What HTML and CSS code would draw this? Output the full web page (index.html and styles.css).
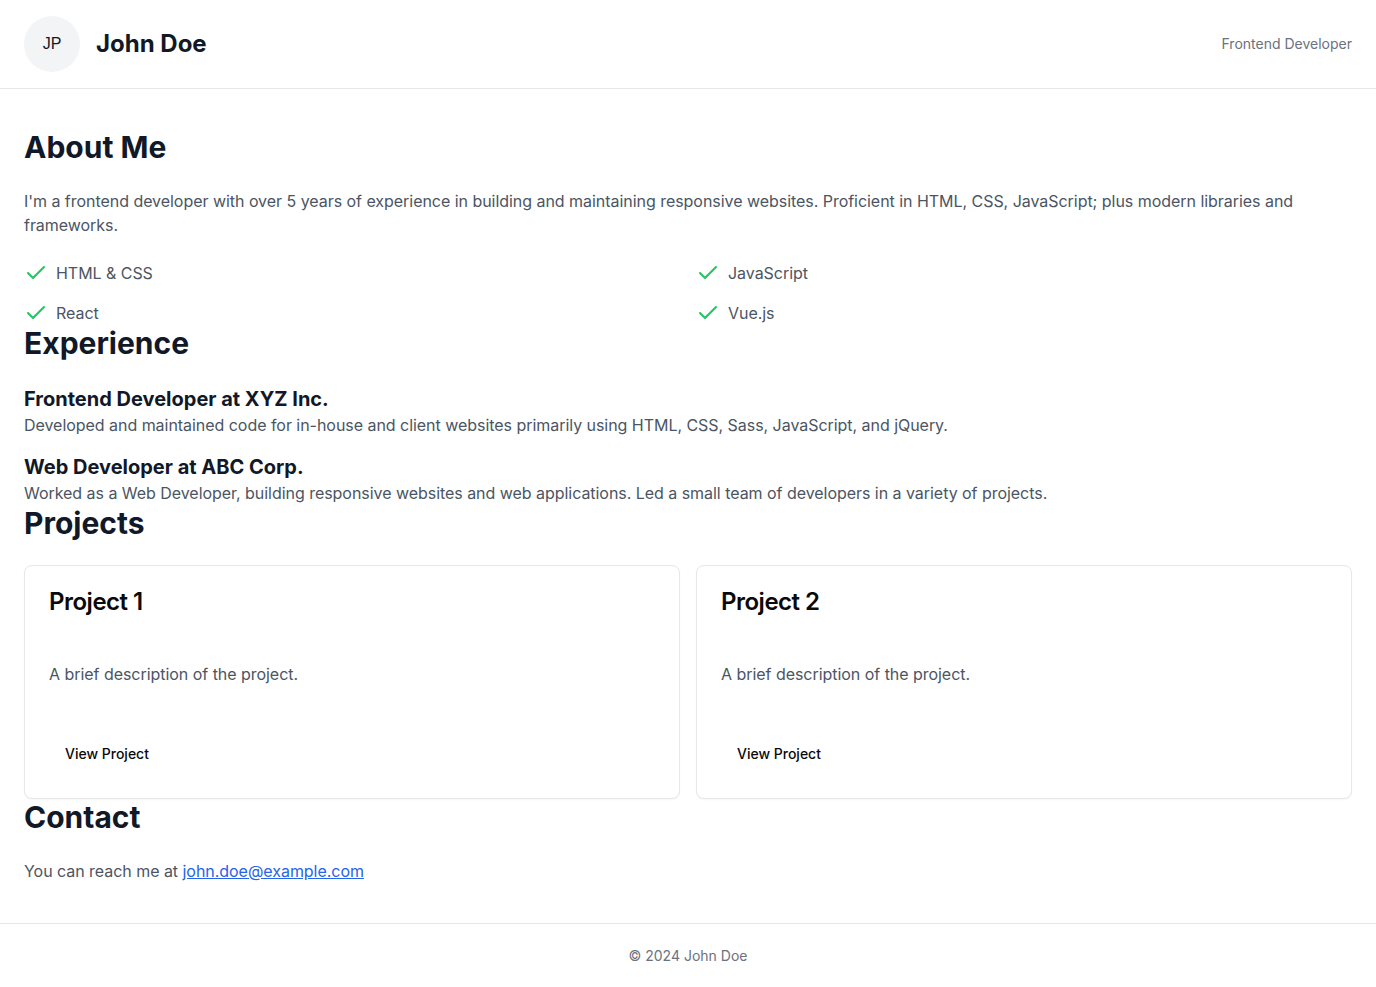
FILE: index.html
```html
<!DOCTYPE html>
<html lang="en">
<head>
<meta charset="utf-8">
<title>John Doe</title>
<link rel="stylesheet" href="styles.css">
</head>
<body>
<header class="site-header">
  <div class="brand">
    <div class="avatar">JP</div>
    <h1 class="name">John Doe</h1>
  </div>
  <span class="role">Frontend Developer</span>
</header>
<main class="main">
  <section class="section">
    <h2 class="section-title">About Me</h2>
    <p class="text about-text">I'm a frontend developer with over 5 years of experience in building and maintaining responsive websites. Proficient in HTML, CSS, JavaScript; plus modern libraries and frameworks.</p>
    <ul class="skills">
      <li class="skill"><svg class="check" viewBox="0 0 24 24" width="24" height="24" fill="none" stroke="currentColor" stroke-width="2" stroke-linecap="round" stroke-linejoin="round"><path d="M20 6 9 17l-5-5"/></svg><span>HTML &amp; CSS</span></li>
      <li class="skill"><svg class="check" viewBox="0 0 24 24" width="24" height="24" fill="none" stroke="currentColor" stroke-width="2" stroke-linecap="round" stroke-linejoin="round"><path d="M20 6 9 17l-5-5"/></svg><span>JavaScript</span></li>
      <li class="skill"><svg class="check" viewBox="0 0 24 24" width="24" height="24" fill="none" stroke="currentColor" stroke-width="2" stroke-linecap="round" stroke-linejoin="round"><path d="M20 6 9 17l-5-5"/></svg><span>React</span></li>
      <li class="skill"><svg class="check" viewBox="0 0 24 24" width="24" height="24" fill="none" stroke="currentColor" stroke-width="2" stroke-linecap="round" stroke-linejoin="round"><path d="M20 6 9 17l-5-5"/></svg><span>Vue.js</span></li>
    </ul>
  </section>
  <section class="section">
    <h2 class="section-title">Experience</h2>
    <div class="job">
      <h3 class="job-title">Frontend Developer at XYZ Inc.</h3>
      <p class="text">Developed and maintained code for in-house and client websites primarily using HTML, CSS, Sass, JavaScript, and jQuery.</p>
    </div>
    <div class="job">
      <h3 class="job-title">Web Developer at ABC Corp.</h3>
      <p class="text">Worked as a Web Developer, building responsive websites and web applications. Led a small team of developers in a variety of projects.</p>
    </div>
  </section>
  <section class="section">
    <h2 class="section-title">Projects</h2>
    <div class="projects">
      <div class="card">
        <h3 class="card-title">Project 1</h3>
        <p class="text card-text">A brief description of the project.</p>
        <div class="card-footer"><button class="btn">View Project</button></div>
      </div>
      <div class="card">
        <h3 class="card-title">Project 2</h3>
        <p class="text card-text">A brief description of the project.</p>
        <div class="card-footer"><button class="btn">View Project</button></div>
      </div>
    </div>
  </section>
  <section class="section">
    <h2 class="section-title">Contact</h2>
    <p class="text">You can reach me at <a class="link" href="mailto:john.doe@example.com">john.doe@example.com</a></p>
  </section>
</main>
<footer class="site-footer">
  <p class="copy">© 2024 John Doe</p>
</footer>
</body>
</html>
```

FILE: styles.css
```css
* { box-sizing: border-box; }
html, body { margin: 0; padding: 0; }
body {
  font-family: Inter, "Noto Sans", sans-serif;
  color: #111827;
  background: #ffffff;
}
.site-header {
  display: flex;
  align-items: center;
  justify-content: space-between;
  padding: 16px 24px;
  border-bottom: 1px solid #e5e7eb;
}
.brand {
  display: flex;
  align-items: center;
  gap: 16px;
}
.avatar {
  width: 56px;
  height: 56px;
  border-radius: 50%;
  background: #f3f4f6;
  display: flex;
  align-items: center;
  justify-content: center;
  font-family: "Liberation Sans", Arial, sans-serif;
  font-size: 16px;
  color: #111827;
}
.name {
  margin: 0;
  font-size: 24px;
  line-height: 32px;
  font-weight: 700;
  color: #111827;
}
.role {
  font-size: 14px;
  line-height: 20px;
  color: #6b7280;
}
.main {
  padding: 40px 24px 40px;
}
.section-title {
  margin: 0 0 24px;
  font-size: 30px;
  line-height: 36px;
  font-weight: 700;
  color: #111827;
}
.text {
  margin: 0;
  font-size: 16px;
  line-height: 24px;
  letter-spacing: -0.04px;
  color: #4b5563;
}
.about-text { margin-bottom: 24px; }
.skills {
  list-style: none;
  margin: 0;
  padding: 0;
  display: grid;
  grid-template-columns: 1fr 1fr;
  column-gap: 16px;
  row-gap: 16px;
}
.skill {
  display: flex;
  align-items: center;
  gap: 8px;
  font-size: 16px;
  line-height: 24px;
  letter-spacing: -0.04px;
  color: #4b5563;
}
.check { color: #22c55e; flex-shrink: 0; }
.job + .job { margin-top: 16px; }
.job-title {
  margin: 0;
  font-size: 20px;
  line-height: 28px;
  font-weight: 700;
  color: #111827;
}
.projects {
  display: grid;
  grid-template-columns: 1fr 1fr;
  gap: 16px;
}
.card {
  border: 1px solid #e5e7eb;
  border-radius: 8px;
  padding: 24px 24px 25px;
  background: #fff;
  box-shadow: 0 1px 2px rgba(0,0,0,0.04);
}
.card-title {
  margin: 0;
  font-size: 24px;
  line-height: 24px;
  font-weight: 600;
  letter-spacing: -0.5px;
  color: #0a0a0a;
}
.card-text { margin-top: 48px; }
.card-footer { margin-top: 47px; }
.btn {
  height: 40px;
  padding: 0 16px;
  border: 0;
  background: transparent;
  font-family: Inter, "Noto Sans", sans-serif;
  font-size: 14px;
  font-weight: 500;
  color: #0a0a0a;
  border-radius: 6px;
  cursor: pointer;
}
.link {
  color: #2563eb;
  text-decoration: underline;
}
.site-footer {
  border-top: 1px solid #e5e7eb;
  padding: 22px 24px 24px;
  text-align: center;
}
.copy {
  margin: 0;
  font-size: 14px;
  line-height: 20px;
  color: #6b7280;
}
```
